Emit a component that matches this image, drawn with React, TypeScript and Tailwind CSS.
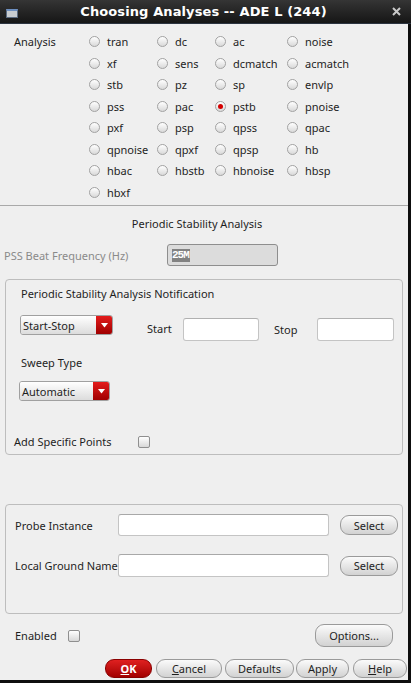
import { ReactNode } from "react";

const analyses = [
  "tran", "dc", "ac", "noise",
  "xf", "sens", "dcmatch", "acmatch",
  "stb", "pz", "sp", "envlp",
  "pss", "pac", "pstb", "pnoise",
  "pxf", "psp", "qpss", "qpac",
  "qpnoise", "qpxf", "qpsp", "hb",
  "hbac", "hbstb", "hbnoise", "hbsp",
  "hbxf",
];

const Radio = ({ on }: { on?: boolean }) => (
  <span className="w-[11px] h-[11px] rounded-full border border-[#a2a2a2] bg-gradient-to-b from-[#ffffff] to-[#d9d9d9] flex items-center justify-center shrink-0">
    {on && <span className="w-[5px] h-[5px] rounded-full bg-[#d40000]" />}
  </span>
);

const Check = () => (
  <span className="w-[12px] h-[12px] rounded-[2px] border border-[#8f8f8f] bg-gradient-to-b from-[#ffffff] to-[#d8d8d8] shrink-0" />
);

const Combo = ({ label, w }: { label: string; w: string }) => (
  <div className={`${w} h-[20px] flex rounded-[3px] border border-[#a0a0a0] overflow-hidden`}>
    <div className="flex-1 bg-gradient-to-b from-[#ffffff] to-[#dcdcdc] pl-[2px] flex items-center">
      {label}
    </div>
    <div className="w-[16px] bg-gradient-to-b from-[#e41b1b] to-[#a00000] flex items-center justify-center">
      <svg width="7" height="5" viewBox="0 0 7 5">
        <path d="M0 0 L7 0 L3.5 4.5 Z" fill="#ffffff" />
      </svg>
    </div>
  </div>
);

const Btn = ({ children, w, h = "h-[20px]", red }: { children: ReactNode; w: string; h?: string; red?: boolean }) => (
  <button
    className={`${w} ${h} rounded-[9px] border flex items-center justify-center ${
      red
        ? "border-[#8a0000] bg-gradient-to-b from-[#e02020] to-[#a30000] text-white font-bold"
        : "border-[#9a9a9a] bg-gradient-to-b from-[#fbfbfb] to-[#d2d2d2] text-[#1e1e1e]"
    }`}
  >
    {children}
  </button>
);

const Field = ({ w }: { w: string }) => (
  <div className={`${w} h-[23px] bg-white border border-[#c4c4c4] border-t-[#b0b0b0] rounded-[3px]`} />
);

export default function App() {
  return (
    <div className="w-[411px] h-[683px] bg-[#0e0e0e] flex flex-col text-[11px] leading-[15px] text-[#1e1e1e] font-['Noto_Sans',sans-serif]">
      {/* title bar */}
      <div className="h-[24px] relative flex items-center justify-center bg-gradient-to-b from-[#353535] to-[#161616] border-b border-[#2c3440]">
        <div className="absolute left-[6px] top-[9px] w-[12px] h-[9px] border border-[#5a6a80] bg-[#c8ccd0] border-t-[2px] border-t-[#6d8fc0]" />
        <span className="font-['DejaVu_Sans',sans-serif] font-bold text-[13px] text-white tracking-[0.1px] -ml-[4px]">
          Choosing Analyses -- ADE L (244)
        </span>
        <svg className="absolute left-[392px] top-[7px]" width="9" height="9" viewBox="0 0 9 9">
          <path d="M1 1 L8 8 M8 1 L1 8" stroke="#c9c9c9" strokeWidth="2" />
        </svg>
      </div>

      <div className="w-[408px] h-[656px] bg-[#efefef] flex flex-col">
        {/* analysis choices */}
        <div className="flex pt-[7px]">
          <div className="w-[89px] pl-[14px] h-[21.5px] flex items-center">Analysis</div>
          <div className="grid grid-cols-[68px_58px_72px_1fr] auto-rows-[21.5px]">
            {analyses.map((a) => (
              <div key={a} className="flex items-center gap-[7px]">
                <Radio on={a === "pstb"} />
                <span>{a}</span>
              </div>
            ))}
          </div>
        </div>
        <div className="mt-[2px] border-t border-[#a9a9a9]" />

        <div className="mt-[10px] text-center pr-[14px]">Periodic Stability Analysis</div>

        <div className="mt-[13px] flex items-center h-[22px]">
          <span className="w-[167px] pl-[4px] text-[#8a8a8a]">PSS Beat Frequency (Hz)</span>
          <div className="w-[111px] h-[22px] rounded-[3px] border border-[#8e8e8e] bg-[#dcdcdc] flex items-center pl-[4px]">
            <span className="bg-[#828282] text-white font-['Liberation_Mono',monospace] font-bold text-[11px] leading-[13px] tracking-[-1px] pr-[1px]">
              25M
            </span>
          </div>
        </div>

        {/* notification group */}
        <div className="mt-[13px] mx-[5px] h-[176px] border border-[#bdbdbd] rounded-[4px] flex flex-col">
          <div className="pt-[6px] pl-[15px]">Periodic Stability Analysis Notification</div>
          <div className="mt-[14px] flex items-start">
            <div className="ml-[14px]">
              <Combo label="Start-Stop" w="w-[93px]" />
            </div>
            <span className="ml-[34px] w-[36px] mt-[6px]">Start</span>
            <div className="mt-[3px]">
              <Field w="w-[76px]" />
            </div>
            <span className="ml-[15px] w-[43px] mt-[7px]">Stop</span>
            <div className="mt-[3px]">
              <Field w="w-[77px]" />
            </div>
          </div>
          <div className="mt-[14px] pl-[15px]">Sweep Type</div>
          <div className="mt-[11px] ml-[13px]">
            <Combo label="Automatic" w="w-[91px]" />
          </div>
          <div className="mt-[33px] flex items-center pl-[8px]">
            <span className="w-[124px]">Add Specific Points</span>
            <Check />
          </div>
        </div>

        {/* probe group */}
        <div className="mt-[49px] mx-[5px] h-[110px] border border-[#bdbdbd] rounded-[4px] flex flex-col pt-[9px]">
          <div className="flex items-center">
            <span className="w-[112px] pl-[9px] whitespace-nowrap overflow-hidden">Probe Instance</span>
            <div className="w-[211px] h-[22px] bg-white border border-[#c4c4c4] border-t-[#a8a8a8] rounded-[3px]" />
            <div className="ml-[11px]">
              <Btn w="w-[58px]">Select</Btn>
            </div>
          </div>
          <div className="mt-[18px] flex items-center">
            <span className="w-[112px] pl-[9px] whitespace-nowrap overflow-hidden">Local Ground Name</span>
            <div className="w-[211px] h-[23px] bg-white border border-[#c4c4c4] border-t-[#a8a8a8] rounded-[3px]" />
            <div className="ml-[11px]">
              <Btn w="w-[58px]">Select</Btn>
            </div>
          </div>
        </div>

        <div className="mt-[10px] flex items-center h-[23px] pl-[15px] pr-[15px]">
          <span className="w-[53px]">Enabled</span>
          <Check />
          <div className="ml-auto">
            <Btn w="w-[78px]" h="h-[23px]">Options...</Btn>
          </div>
        </div>

        <div className="mt-[12px] flex items-center justify-end pr-[1px]">
          <Btn w="w-[47px]" h="h-[19px]" red>
            <span className="underline">O</span>K
          </Btn>
          <div className="ml-[4px]">
            <Btn w="w-[66px]" h="h-[19px]">
              <span className="underline">C</span>ancel
            </Btn>
          </div>
          <div className="ml-[3px]">
            <Btn w="w-[69px]" h="h-[19px]">Defaults</Btn>
          </div>
          <div className="ml-[2px]">
            <Btn w="w-[53px]" h="h-[19px]">Apply</Btn>
          </div>
          <div className="ml-[4px]">
            <Btn w="w-[54px]" h="h-[19px]">
              <span className="underline">H</span>elp
            </Btn>
          </div>
        </div>
      </div>
    </div>
  );
}
